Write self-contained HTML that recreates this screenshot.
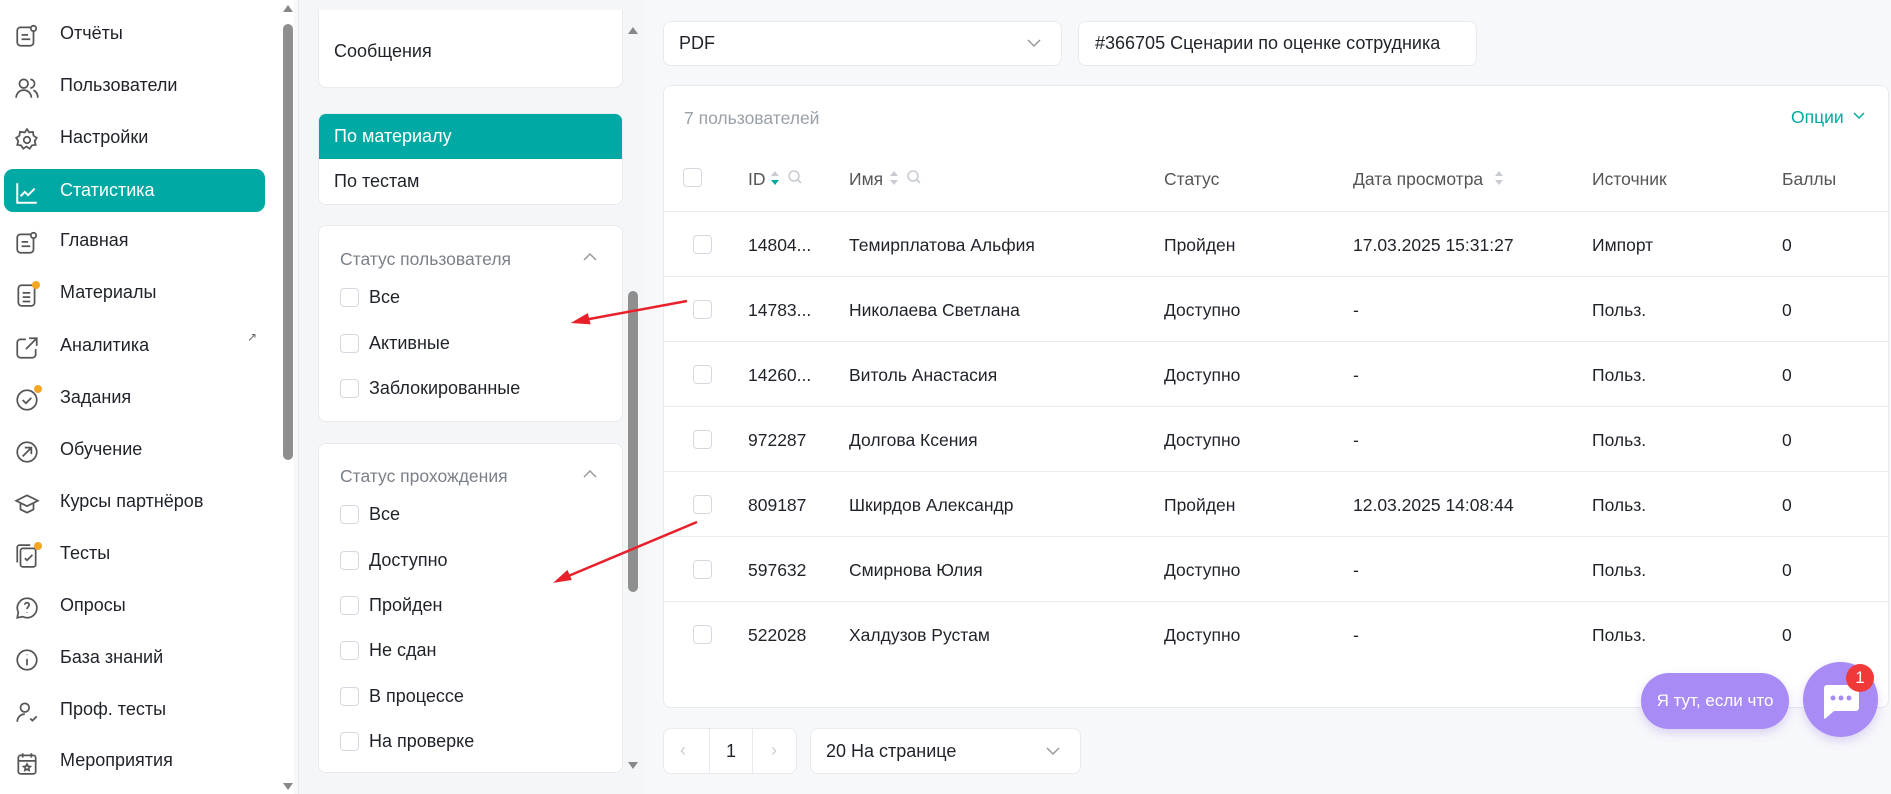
<!DOCTYPE html>
<html><head><meta charset="utf-8"><style>
*{box-sizing:border-box;margin:0;padding:0}
body{width:1891px;height:794px;overflow:hidden;background:#f7f8fa;font-family:"Liberation Sans",sans-serif;color:#1f2329;position:relative}
.abs{position:absolute}
#side{left:0;top:0;width:280px;height:794px;background:#fff}
.nav{position:absolute;left:4px;width:261px;height:44px;display:flex;align-items:center;font-size:18px;color:#1f2329;border-radius:9px}
.nav svg{position:absolute;left:10px;top:11px}
.nav span{position:absolute;left:56px;top:11px}
.nav.act{background:#00a9a4;color:#fff}
.dot{position:absolute;width:8px;height:8px;border-radius:50%;background:#f5a623}
.sb{background:#8f8f8f;border-radius:5px}
.box{background:#fff;border:1px solid #e8eaee;border-radius:8px}
.cb{position:absolute;width:19px;height:19px;border:1px solid #d5d8de;border-radius:4px;background:#fff}
.lbl{position:absolute;font-size:18px;color:#1f2329}
.hd{position:absolute;font-size:17.5px;color:#7a7f88}
.row{position:absolute;left:663px;width:1225px;height:65px;border-top:1px solid #e8eaee;font-size:17.5px}
.row div{position:absolute;top:23px}
.row .cb{top:23px;left:30px}
</style></head><body>
<div id="side" class="abs">
<div class="nav" style="top:12px"><svg width="26" height="26" viewBox="0 0 24 24" fill="none" stroke="#555" stroke-width="1.6"><rect x="3" y="4" width="15" height="17" rx="3"/><path d="M7 11h6M7 15h8"/><circle cx="18" cy="5" r="2.5" fill="#fff"/></svg><span>Отчёты</span></div>
<div class="nav" style="top:64px"><svg width="26" height="26" viewBox="0 0 24 24" fill="none" stroke="#555" stroke-width="1.6"><circle cx="9" cy="8" r="4"/><path d="M2 21c0-4 3-7 7-7s7 3 7 7M15 4a4 4 0 010 8M18 14c2 1 4 3 4 7"/></svg><span>Пользователи</span></div>
<div class="nav" style="top:116px"><svg width="26" height="26" viewBox="0 0 24 24" fill="none" stroke="#555" stroke-width="1.6"><circle cx="12" cy="12" r="3"/><path d="M12 2l2 3 3.5-.5.5 3.5 3 2-2 3 1 3.5-3.5.5-2 3-3-2-3 2-2-3-3.5-.5 1-3.5-2-3 3-2 .5-3.5L10 5z"/></svg><span>Настройки</span></div>
<div class="nav act" style="top:169px;height:43px"><svg width="26" height="26" viewBox="0 0 24 24" fill="none" stroke="#fff" stroke-width="1.8"><path d="M3 3v18h18M6 15l4-4 3 3 6-6"/></svg><span>Статистика</span></div>
<div class="nav" style="top:219px"><svg width="26" height="26" viewBox="0 0 24 24" fill="none" stroke="#555" stroke-width="1.6"><rect x="3" y="4" width="15" height="17" rx="3"/><path d="M7 11h6M7 15h8"/><circle cx="18" cy="5" r="2.5" fill="#fff"/></svg><span>Главная</span></div>
<div class="nav" style="top:271px"><svg width="26" height="26" viewBox="0 0 24 24" fill="none" stroke="#555" stroke-width="1.6"><rect x="4" y="3" width="15" height="19" rx="3"/><path d="M8 10h7M8 14h7M8 18h7"/></svg><i class="dot" style="left:28px;top:10px"></i><span>Материалы</span></div>
<div class="nav" style="top:324px"><svg width="26" height="26" viewBox="0 0 24 24" fill="none" stroke="#555" stroke-width="1.6"><path d="M11 4H6a3 3 0 00-3 3v11a3 3 0 003 3h11a3 3 0 003-3v-5M14 3h7v7M21 3l-10 10"/></svg><span>Аналитика</span><span style="left:243px;top:6px;font-size:12px;color:#666">↗</span></div>
<div class="nav" style="top:376px"><svg width="26" height="26" viewBox="0 0 24 24" fill="none" stroke="#555" stroke-width="1.6"><circle cx="12" cy="12" r="9"/><path d="M8 12l3 3 5-5"/></svg><i class="dot" style="left:30px;top:9px"></i><span>Задания</span></div>
<div class="nav" style="top:428px"><svg width="26" height="26" viewBox="0 0 24 24" fill="none" stroke="#555" stroke-width="1.6"><circle cx="12" cy="12" r="9"/><path d="M8 16l8-8M10 8h6v6"/></svg><span>Обучение</span></div>
<div class="nav" style="top:480px"><svg width="26" height="26" viewBox="0 0 24 24" fill="none" stroke="#555" stroke-width="1.6"><path d="M2 9l10-5 10 5-10 5zM6 11v6l6 3 6-3v-6"/></svg><span>Курсы партнёров</span></div>
<div class="nav" style="top:532px"><svg width="26" height="26" viewBox="0 0 24 24" fill="none" stroke="#555" stroke-width="1.6"><rect x="6" y="5" width="14" height="17" rx="2"/><path d="M3 18V4a2 2 0 012-2h10M10 14l2 2 5-5"/></svg><i class="dot" style="left:30px;top:10px"></i><span>Тесты</span></div>
<div class="nav" style="top:584px"><svg width="26" height="26" viewBox="0 0 24 24" fill="none" stroke="#555" stroke-width="1.6"><path d="M12 3a9 9 0 00-8 13l-1 5 5-1a9 9 0 104-17z"/><path d="M10 9a2 2 0 114 0c0 2-2 2-2 4M12 16v.5"/></svg><span>Опросы</span></div>
<div class="nav" style="top:636px"><svg width="26" height="26" viewBox="0 0 24 24" fill="none" stroke="#555" stroke-width="1.6"><circle cx="12" cy="12" r="9"/><path d="M12 11v6M12 7v.5"/></svg><span>База знаний</span></div>
<div class="nav" style="top:688px"><svg width="26" height="26" viewBox="0 0 24 24" fill="none" stroke="#555" stroke-width="1.6"><circle cx="10" cy="8" r="4"/><path d="M3 21c0-4 3-7 7-7M15 18l2 2 4-4"/></svg><span>Проф. тесты</span></div>
<div class="nav" style="top:739px"><svg width="26" height="26" viewBox="0 0 24 24" fill="none" stroke="#555" stroke-width="1.6"><rect x="4" y="5" width="16" height="17" rx="2"/><path d="M4 10h16M8 3v4M16 3v4M12 13l1 2 2 .3-1.5 1.4.4 2-1.9-1-1.9 1 .4-2L9 15.3l2-.3z"/></svg><span>Мероприятия</span></div>
</div>
<div class="abs" style="left:280px;top:0;width:14px;height:794px;background:#fff"></div>
<div class="abs sb" style="left:283px;top:24px;width:10px;height:436px"></div>
<div class="abs" style="left:283px;top:5px;width:0;height:0;border-left:5px solid transparent;border-right:5px solid transparent;border-bottom:7px solid #888"></div>
<div class="abs" style="left:283px;top:783px;width:0;height:0;border-left:5px solid transparent;border-right:5px solid transparent;border-top:7px solid #888"></div>
<div class="abs" style="left:298px;top:0;width:1px;height:794px;background:#e8eaee"></div>

<div class="abs" style="left:299px;top:0;width:345px;height:794px;background:#f5f6f8"></div>
<div class="abs box" style="left:318px;top:10px;width:305px;height:78px;border-top:none;border-radius:0 0 8px 8px"></div>
<div class="lbl" style="left:334px;top:41px">Сообщения</div>
<div class="abs box" style="left:318px;top:113px;width:305px;height:92px;overflow:hidden"><div style="height:45px;background:#00a9a4"></div></div>
<div class="lbl" style="left:334px;top:126px;color:#fff">По материалу</div>
<div class="lbl" style="left:334px;top:171px">По тестам</div>
<div class="abs box" style="left:318px;top:225px;width:305px;height:197px"></div>
<div class="hd" style="left:340px;top:249px">Статус пользователя</div>
<svg class="abs" style="left:582px;top:252px" width="16" height="10" viewBox="0 0 16 10" fill="none" stroke="#999" stroke-width="1.5"><path d="M2 8l6-6 6 6"/></svg>
<div class="cb" style="left:340px;top:288px"></div><div class="lbl" style="left:369px;top:287px">Все</div>
<div class="cb" style="left:340px;top:334px"></div><div class="lbl" style="left:369px;top:333px">Активные</div>
<div class="cb" style="left:340px;top:379px"></div><div class="lbl" style="left:369px;top:378px">Заблокированные</div>
<div class="abs box" style="left:318px;top:443px;width:305px;height:330px"></div>
<div class="hd" style="left:340px;top:466px">Статус прохождения</div>
<svg class="abs" style="left:582px;top:469px" width="16" height="10" viewBox="0 0 16 10" fill="none" stroke="#999" stroke-width="1.5"><path d="M2 8l6-6 6 6"/></svg>
<div class="cb" style="left:340px;top:505px"></div><div class="lbl" style="left:369px;top:504px">Все</div>
<div class="cb" style="left:340px;top:551px"></div><div class="lbl" style="left:369px;top:550px">Доступно</div>
<div class="cb" style="left:340px;top:596px"></div><div class="lbl" style="left:369px;top:595px">Пройден</div>
<div class="cb" style="left:340px;top:641px"></div><div class="lbl" style="left:369px;top:640px">Не сдан</div>
<div class="cb" style="left:340px;top:687px"></div><div class="lbl" style="left:369px;top:686px">В процессе</div>
<div class="cb" style="left:340px;top:732px"></div><div class="lbl" style="left:369px;top:731px">На проверке</div>
<div class="abs sb" style="left:628px;top:291px;width:10px;height:301px"></div>
<div class="abs" style="left:628px;top:27px;border-left:5px solid transparent;border-right:5px solid transparent;border-bottom:7px solid #888"></div>
<div class="abs" style="left:628px;top:762px;border-left:5px solid transparent;border-right:5px solid transparent;border-top:7px solid #888"></div>

<div class="abs box" style="left:663px;top:21px;width:399px;height:45px"></div>
<div class="lbl" style="left:679px;top:33px">PDF</div>
<svg class="abs" style="left:1026px;top:38px" width="16" height="10" viewBox="0 0 16 10" fill="none" stroke="#999" stroke-width="1.5"><path d="M2 2l6 6 6-6"/></svg>
<div class="abs box" style="left:1078px;top:21px;width:399px;height:45px;overflow:hidden"><div class="lbl" style="left:16px;top:11px;white-space:nowrap;width:348px;overflow:hidden">#366705 Сценарии по оценке сотрудника</div></div>

<div class="abs box" style="left:663px;top:85px;width:1226px;height:623px"></div>
<div class="hd" style="left:684px;top:108px;color:#9aa0a8">7 пользователей</div>
<div class="lbl" style="left:1791px;top:107px;color:#00a9a4;font-size:17.5px">Опции</div>
<svg class="abs" style="left:1853px;top:112px" width="12" height="8" viewBox="0 0 12 8" fill="none" stroke="#00a9a4" stroke-width="1.5"><path d="M1 1l5 5 5-5"/></svg>
<div class="cb" style="left:683px;top:168px"></div>
<div class="hd" style="left:748px;top:169px;color:#555">ID</div>
<svg class="abs" style="left:770px;top:170px" width="10" height="16"><path d="M1 6l4-5 4 5z" fill="#c8ccd2"/><path d="M1 10l4 5 4-5z" fill="#00a9a4"/></svg>
<svg class="abs" style="left:787px;top:169px" width="16" height="16" fill="none" stroke="#c8ccd2" stroke-width="1.6"><circle cx="7" cy="7" r="5"/><path d="M11 11l3 3"/></svg>
<div class="hd" style="left:849px;top:169px;color:#555">Имя</div>
<svg class="abs" style="left:889px;top:170px" width="10" height="16"><path d="M1 6l4-5 4 5z" fill="#c8ccd2"/><path d="M1 10l4 5 4-5z" fill="#c8ccd2"/></svg>
<svg class="abs" style="left:906px;top:169px" width="16" height="16" fill="none" stroke="#c8ccd2" stroke-width="1.6"><circle cx="7" cy="7" r="5"/><path d="M11 11l3 3"/></svg>
<div class="hd" style="left:1164px;top:169px;color:#555">Статус</div>
<div class="hd" style="left:1353px;top:169px;color:#555">Дата просмотра</div>
<svg class="abs" style="left:1494px;top:170px" width="10" height="16"><path d="M1 6l4-5 4 5z" fill="#c8ccd2"/><path d="M1 10l4 5 4-5z" fill="#c8ccd2"/></svg>
<div class="hd" style="left:1592px;top:169px;color:#555">Источник</div>
<div class="hd" style="left:1782px;top:169px;color:#555">Баллы</div>

<div class="row" style="top:211px"><i class="cb"></i><div style="left:85px">14804...</div><div style="left:186px">Темирплатова Альфия</div><div style="left:501px">Пройден</div><div style="left:690px">17.03.2025 15:31:27</div><div style="left:929px">Импорт</div><div style="left:1119px">0</div></div>
<div class="row" style="top:276px"><i class="cb"></i><div style="left:85px">14783...</div><div style="left:186px">Николаева Светлана</div><div style="left:501px">Доступно</div><div style="left:690px">-</div><div style="left:929px">Польз.</div><div style="left:1119px">0</div></div>
<div class="row" style="top:341px"><i class="cb"></i><div style="left:85px">14260...</div><div style="left:186px">Витоль Анастасия</div><div style="left:501px">Доступно</div><div style="left:690px">-</div><div style="left:929px">Польз.</div><div style="left:1119px">0</div></div>
<div class="row" style="top:406px"><i class="cb"></i><div style="left:85px">972287</div><div style="left:186px">Долгова Ксения</div><div style="left:501px">Доступно</div><div style="left:690px">-</div><div style="left:929px">Польз.</div><div style="left:1119px">0</div></div>
<div class="row" style="top:471px"><i class="cb"></i><div style="left:85px">809187</div><div style="left:186px">Шкирдов Александр</div><div style="left:501px">Пройден</div><div style="left:690px">12.03.2025 14:08:44</div><div style="left:929px">Польз.</div><div style="left:1119px">0</div></div>
<div class="row" style="top:536px"><i class="cb"></i><div style="left:85px">597632</div><div style="left:186px">Смирнова Юлия</div><div style="left:501px">Доступно</div><div style="left:690px">-</div><div style="left:929px">Польз.</div><div style="left:1119px">0</div></div>
<div class="row" style="top:601px"><i class="cb"></i><div style="left:85px">522028</div><div style="left:186px">Халдузов Рустам</div><div style="left:501px">Доступно</div><div style="left:690px">-</div><div style="left:929px">Польз.</div><div style="left:1119px">0</div></div>

<div class="abs box" style="left:663px;top:728px;width:134px;height:46px"></div>
<div class="abs" style="left:709px;top:728px;width:44px;height:46px;border-left:1px solid #e8eaee;border-right:1px solid #e8eaee"></div>
<div class="lbl" style="left:726px;top:741px">1</div>
<div class="lbl" style="left:680px;top:740px;color:#ccc">‹</div>
<div class="lbl" style="left:771px;top:740px;color:#ccc">›</div>
<div class="abs box" style="left:810px;top:728px;width:271px;height:46px"></div>
<div class="lbl" style="left:826px;top:741px">20 На странице</div>
<svg class="abs" style="left:1045px;top:746px" width="16" height="10" viewBox="0 0 16 10" fill="none" stroke="#999" stroke-width="1.5"><path d="M2 2l6 6 6-6"/></svg>

<svg class="abs" style="left:0;top:0" width="1891" height="794"><g stroke="#e8202a" stroke-width="2.5" fill="#e8202a"><path d="M687 301L584 320"/><path d="M575 322l12-7 2 8z"/><path d="M697 522L566 577"/><path d="M557 581l10-9 3 7z"/></g></svg>

<div class="abs" style="left:1641px;top:673px;width:148px;height:56px;border-radius:28px;background:#a98bf5;color:#fff;font-size:17px;line-height:56px;text-align:center;box-shadow:0 4px 10px rgba(150,120,230,.3)">Я тут, если что</div>
<div class="abs" style="left:1803px;top:662px;width:75px;height:75px;border-radius:50%;background:#a98bf5;box-shadow:0 4px 10px rgba(150,120,230,.3)"></div>
<svg class="abs" style="left:1822px;top:683px" width="38" height="36" viewBox="0 0 38 36"><path d="M4 2h30a3 3 0 013 3v20a3 3 0 01-3 3H12l-8 7a1 1 0 01-2-1V5a3 3 0 013-3z" fill="#fff"/><circle cx="11" cy="15" r="2.5" fill="#a98bf5"/><circle cx="19" cy="15" r="2.5" fill="#a98bf5"/><circle cx="27" cy="15" r="2.5" fill="#a98bf5"/></svg>
<div class="abs" style="left:1846px;top:664px;width:28px;height:28px;border-radius:50%;background:#f03a3a;color:#fff;font-size:17px;text-align:center;line-height:28px">1</div>
</body></html>
